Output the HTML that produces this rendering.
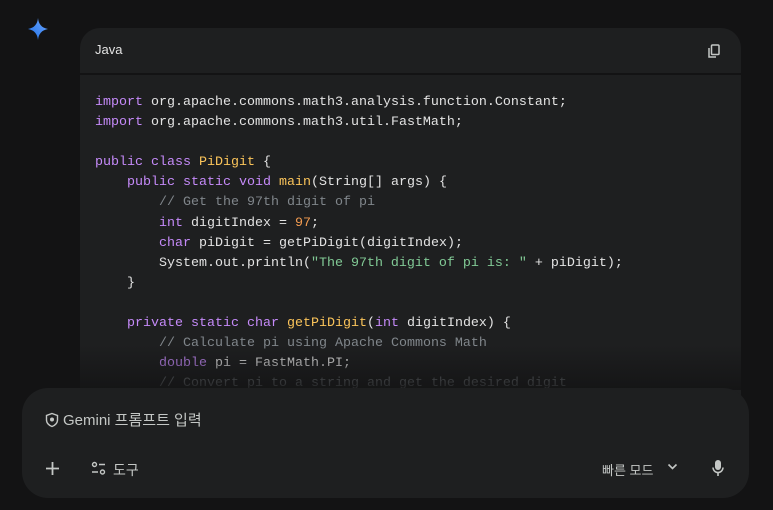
<!DOCTYPE html>
<html><head><meta charset="utf-8"><style>
*{margin:0;padding:0;box-sizing:border-box}
body{width:773px;height:510px;background:#131314;overflow:hidden;position:relative;font-family:"Liberation Sans","Noto Sans CJK KR",sans-serif;color:#e3e3e3}
.star{position:absolute;left:26px;top:17px}
.hdr{position:absolute;left:80px;top:28px;width:661px;height:45px;background:#1e1f20;border-radius:20px 20px 0 0}
.hdr span{position:absolute;left:15px;top:14px;font-size:13px;color:#e3e3e3}
.copy{position:absolute;right:20px;top:16px}
.code{position:absolute;left:80px;top:75px;width:661px;height:340px;background:#1e1f20}
pre{position:absolute;left:95px;top:93px;font-family:"Liberation Mono",monospace;font-size:13.33px;line-height:20.1px;color:#e3e3e3}
.k{color:#c58af9}.y{color:#fbc45a}.g{color:#81c995}.o{color:#f29b50}.c{color:#80868b}
.fade{position:absolute;left:0;top:345px;width:773px;height:45px;background:linear-gradient(rgba(19,19,20,0),rgba(19,19,20,.85))}
.input{position:absolute;left:22px;top:388px;width:727px;height:110px;background:#1e1f20;border-radius:26px}
.ph{position:absolute;left:45px;top:409px;font-size:15px;color:#c4c7c5;display:flex;align-items:center;gap:4px}
.b{position:absolute;font-size:14px;color:#c4c7c5}
</style></head><body>
<svg class="star" width="24" height="24" viewBox="0 0 24 24"><defs><linearGradient id="gg" x1="0" y1="1" x2="1" y2="0"><stop offset="0" stop-color="#1c6fe8"/><stop offset="1" stop-color="#6fa8ff"/></linearGradient></defs><path d="M12 1C12.6 7 15.5 10.8 22 12 15.5 13.2 12.6 17 12 23 11.4 17 8.5 13.2 2 12 8.5 10.8 11.4 7 12 1Z" fill="url(#gg)"/></svg>
<div class="hdr"><span>Java</span>
<svg class="copy" width="14" height="15" viewBox="0 0 14 15" fill="none" stroke="#c4c7c5" stroke-width="1.5"><rect x="4.5" y="1" width="7.5" height="9.5" rx="1"/><path d="M2 4v9h7"/></svg></div>
<div class="code"></div>
<pre><span class="k">import</span> org.apache.commons.math3.analysis.function.Constant;
<span class="k">import</span> org.apache.commons.math3.util.FastMath;

<span class="k">public class</span> <span class="y">PiDigit</span> {
    <span class="k">public static void</span> <span class="y">main</span>(String[] args) {
        <span class="c">// Get the 97th digit of pi</span>
        <span class="k">int</span> digitIndex = <span class="o">97</span>;
        <span class="k">char</span> piDigit = getPiDigit(digitIndex);
        System.out.println(<span class="g">"The 97th digit of pi is: "</span> + piDigit);
    }

    <span class="k">private static char</span> <span class="y">getPiDigit</span>(<span class="k">int</span> digitIndex) {
        <span class="c">// Calculate pi using Apache Commons Math</span>
        <span class="k">double</span> pi = FastMath.PI;
        <span class="c">// Convert pi to a string and get the desired digit</span></pre>
<div class="fade"></div>
<div class="input"></div>
<div class="ph"><svg width="14" height="16" viewBox="0 0 14 16" fill="none" stroke="#c4c7c5" stroke-width="1.4"><path d="M7 1.5L12.5 3.5V8c0 3-2.5 5.5-5.5 6.5C4 13.5 1.5 11 1.5 8V3.5Z"/><circle cx="7" cy="7.5" r="1.3" fill="#c4c7c5"/></svg>Gemini 프롬프트 입력</div>
<svg style="position:absolute;left:45px;top:461px" width="15" height="15" viewBox="0 0 15 15" stroke="#c4c7c5" stroke-width="1.8"><path d="M7.5 1v13M1 7.5h13"/></svg>
<svg style="position:absolute;left:91px;top:461px" width="15" height="15" viewBox="0 0 15 15" fill="none" stroke="#c4c7c5" stroke-width="1.4"><circle cx="3.5" cy="3.5" r="2"/><path d="M8 3.5h6M1 11h6"/><circle cx="11.5" cy="11" r="2"/></svg>
<div class="b" style="left:113px;top:460px">도구</div>
<div class="b" style="left:602px;top:460px;font-size:13px">빠른 모드</div>
<svg style="position:absolute;left:667px;top:463px" width="11" height="8" viewBox="0 0 11 8" fill="none" stroke="#c4c7c5" stroke-width="1.6"><path d="M1.5 1.5l4 4 4-4"/></svg>
<svg style="position:absolute;left:711px;top:459px" width="14" height="18" viewBox="0 0 14 18" fill="#c4c7c5"><rect x="4" y="1" width="6" height="10" rx="3"/><path d="M2 8.5a5 5 0 0 0 10 0" fill="none" stroke="#c4c7c5" stroke-width="1.5"/><rect x="6.2" y="13" width="1.6" height="4"/></svg>
</body></html>
